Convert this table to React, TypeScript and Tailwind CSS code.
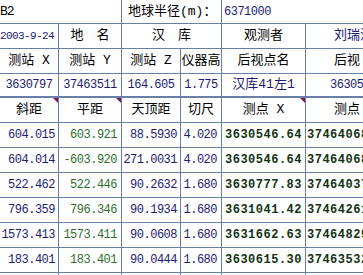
import React from 'react';

const font = { fontFamily: '"Liberation Mono", "Noto Sans CJK SC", monospace' };

type CellProps = {
  w: string;
  className?: string;
  children?: React.ReactNode;
  note?: boolean;
  last?: boolean;
};

function Cell({ w, className = '', children, note, last }: CellProps) {
  return (
    <div
      className={`relative flex h-full shrink-0 items-center overflow-hidden whitespace-nowrap ${
        last ? '' : 'border-r border-[#6a7fa6]'
      } ${w} ${className}`}
    >
      {children}
      {note && (
        <span className="absolute right-0 top-0 h-0 w-0 border-l-[5px] border-t-[5px] border-l-transparent border-t-[#7b1b4f]" />
      )}
    </div>
  );
}

const rows = [
  ['604.015', '603.921', '88.5930', '4.020', '3630546.64', '37464068.27'],
  ['604.014', '-603.920', '271.0031', '4.020', '3630546.64', '37464068.26'],
  ['522.462', '522.446', '90.2632', '1.680', '3630777.83', '37464037.55'],
  ['796.359', '796.346', '90.1934', '1.680', '3631041.42', '37464261.08'],
  ['1573.413', '1573.411', '90.0608', '1.680', '3631662.63', '37464829.74'],
  ['183.401', '183.401', '90.0444', '1.680', '3630615.30', '37463532.19'],
  ['412.870', '412.862', '90.1120', '1.680', '3630402.11', '37463275.40'],
];

const navy = 'text-[#1c1c72]';
const num = 'text-[12px] tracking-[-0.5px]';
const cjk = 'text-[13px]';

export default function App() {
  return (
    <div className="h-[275px] w-[363px] overflow-hidden bg-white text-black" style={font}>
      <div className="w-[420px]">
        {/* top line */}
        <div className="flex h-[24px] border-b border-[#6a7fa6]">
          <Cell w="w-[122px]" className="text-[13px] tracking-[-1px]">B2</Cell>
          <Cell w="w-[100px]" className={`${cjk} pl-[6px]`}>地球半径(m)：</Cell>
          <Cell w="w-[198px]" className={`${num} ${navy} pl-[2px]`} last>6371000</Cell>
        </div>

        <div className="flex h-[25px] border-b border-[#6a7fa6]">
          <Cell w="w-[59px]" className={`justify-end pr-[4px] text-[11px] tracking-[-0.6px] ${navy}`}>2003-9-24</Cell>
          <Cell w="w-[63px]" className={`justify-center ${cjk}`}>地　名</Cell>
          <Cell w="w-[100px]" className={`justify-center ${cjk}`}>汉　库</Cell>
          <Cell w="w-[84px]" className={`justify-center ${cjk}`}>观测者</Cell>
          <Cell w="w-[114px]" className={`justify-start pl-[28px] ${cjk} ${navy}`} last>刘瑞涛</Cell>
        </div>

        <div className="flex h-[25px] border-b border-[#6a7fa6]">
          <Cell w="w-[59px]" className={`justify-center ${cjk}`}>测站 X</Cell>
          <Cell w="w-[63px]" className={`justify-center ${cjk}`}>测站 Y</Cell>
          <Cell w="w-[59px]" className={`justify-center ${cjk}`}>测站 Z</Cell>
          <Cell w="w-[41px]" className={`justify-center ${cjk}`}>仪器高</Cell>
          <Cell w="w-[84px]" className={`justify-center ${cjk}`}>后视点名</Cell>
          <Cell w="w-[114px]" className={`justify-start pl-[28px] ${cjk}`} last>后视 X</Cell>
        </div>

        <div className="flex h-[24px] border-b-2 border-[#6a7fa6]">
          <Cell w="w-[59px]" className={`justify-center ${num} ${navy}`}>3630797</Cell>
          <Cell w="w-[63px]" className={`justify-center ${num} ${navy}`}>37463511</Cell>
          <Cell w="w-[59px]" className={`justify-center ${num} ${navy}`}>164.605</Cell>
          <Cell w="w-[41px]" className={`justify-center ${num} ${navy}`}>1.775</Cell>
          <Cell w="w-[84px]" className={`justify-center ${cjk} ${navy}`}>汉库41左1</Cell>
          <Cell w="w-[114px]" className={`justify-start pl-[24px] ${num} ${navy}`} last>3630520</Cell>
        </div>

        <div className="flex h-[25px] border-b border-[#6a7fa6]">
          <Cell w="w-[59px]" className={`justify-center ${cjk}`} note>斜距</Cell>
          <Cell w="w-[63px]" className={`justify-center ${cjk}`} note>平距</Cell>
          <Cell w="w-[59px]" className={`justify-center ${cjk}`}>天顶距</Cell>
          <Cell w="w-[41px]" className={`justify-center ${cjk}`}>切尺</Cell>
          <Cell w="w-[84px]" className={`justify-center ${cjk}`} note>测点 X</Cell>
          <Cell w="w-[114px]" className={`justify-start pl-[28px] ${cjk}`} last>测点 Y</Cell>
        </div>

        {rows.map((r, i) => (
          <div key={i} className="flex h-[25px] border-b border-[#6a7fa6]">
            <Cell w="w-[59px]" className={`justify-end pr-[3px] ${num} ${navy}`}>{r[0]}</Cell>
            <Cell w="w-[63px]" className={`justify-end pr-[4px] ${num} text-[#2f6f2f]`}>{r[1]}</Cell>
            <Cell w="w-[59px]" className={`justify-end pr-[3px] ${num} ${navy}`}>{r[2]}</Cell>
            <Cell w="w-[41px]" className={`justify-end pr-[4px] ${num} ${navy}`}>{r[3]}</Cell>
            <Cell w="w-[84px]" className="justify-end pr-[3px] text-[12px] font-bold tracking-[0.5px] text-[#123312]">{r[4]}</Cell>
            <Cell w="w-[114px]" className="justify-start pl-[1px] text-[12px] font-bold tracking-[0.5px] text-[#123312]" last>{r[5]}</Cell>
          </div>
        ))}
      </div>
    </div>
  );
}
